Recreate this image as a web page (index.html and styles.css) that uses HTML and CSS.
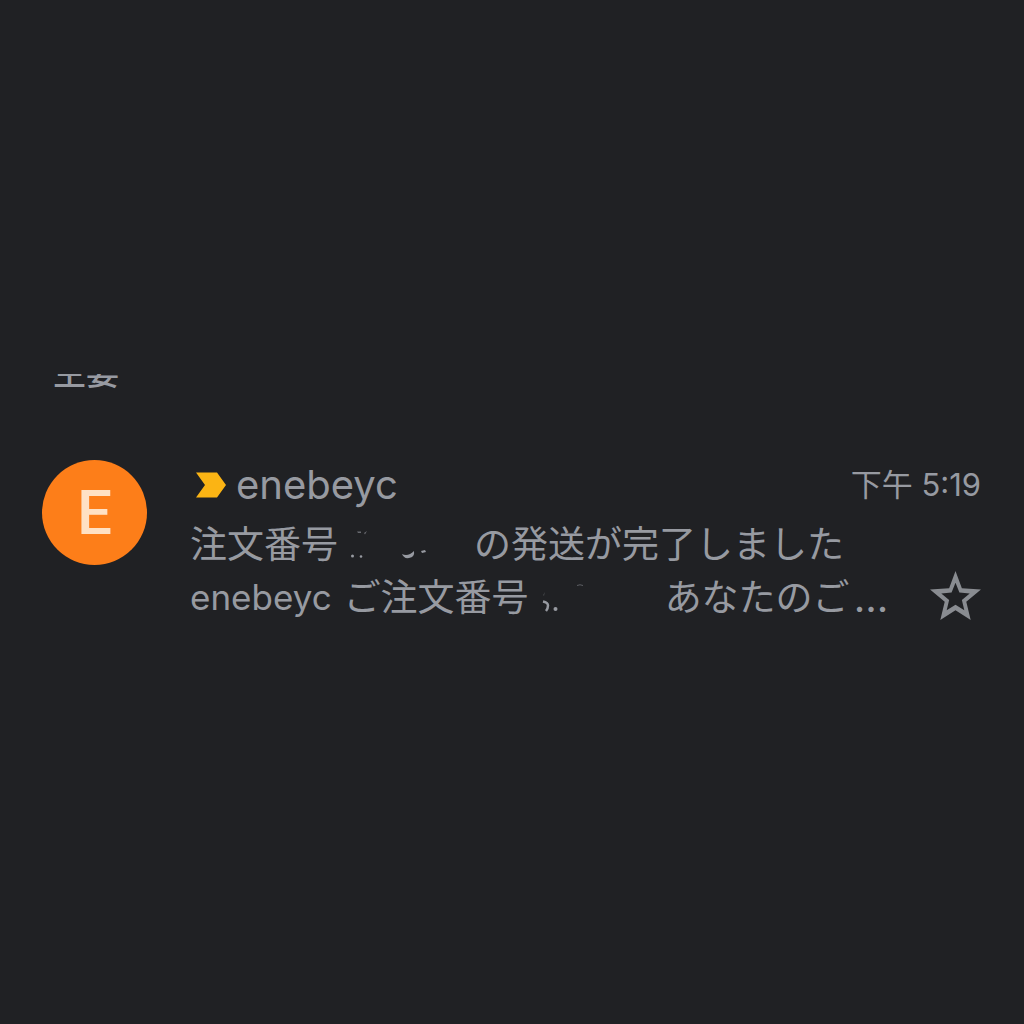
FILE: index.html
```html
<!DOCTYPE html>
<html lang="ja">
<head>
  <meta charset="UTF-8">
  <title>主要</title>
  <meta name="viewport" content="width=device-width, initial-scale=1.0">
  <link rel="stylesheet" href="styles.css">
</head>
<body>

<main class="inbox">
  <h1 class="section-title"><span>主要</span></h1>

  <article class="mail">
    <div class="avatar">E</div>

    <div class="content">
      <div class="top">
        <svg class="marker" viewBox="0 0 30 26" aria-hidden="true">
          <path d="M0 0.500H21L30 13L21 25.500H0L9 13Z" fill="#fbb414"/>
        </svg>
        <h2 class="sender">enebeyc</h2>
        <time class="time">下午 5:19</time>
      </div>

      <p class="line">
        <span>注文番号</span>
        <svg class="hidden-number" viewBox="0 0 136 40" aria-hidden="true">
          <g fill="#979aa1">
            <path d="M19 6.500h4v1.500h-3zM26 8l3-2-2 3.500z" opacity=".6"/>
            <circle cx="14.500" cy="31" r="1.500"/>
            <circle cx="23" cy="31.500" r="1.300"/>
            <path d="M64 29q6 3 12-3q1 6-5 7q-5 1-7-4zM83 26l4-1 1 2-4 1z"/>
          </g>
        </svg>
        <span>の発送が完了しました</span>
      </p>

      <div class="bottom">
        <p class="line">
          <span class="latin">enebeyc</span>
          <span>ご注文番号</span>
          <svg class="hidden-number" viewBox="0 0 136 40" aria-hidden="true">
            <path d="M14 17l2-3-1 4z" fill="#979aa1" opacity=".3"/>
            <path d="M14 23.500q5 1 5 4t-2 5.500" fill="none" stroke="#979aa1" stroke-width="2.500"/>
            <circle cx="26.500" cy="31" r="2" fill="#979aa1"/>
            <path d="M48 7.500q3-1.500 6 0" fill="none" stroke="#979aa1" opacity=".5"/>
          </svg>
          <span>あなたのご</span><span class="dots">...</span>
        </p>
        <button class="star" type="button" aria-label="スター">
          <svg viewBox="0 0 52 50" aria-hidden="true">
            <path fill-rule="evenodd" fill="#898c91" d="M26 0L32.500 17.500L52 19L37 31.500L41.500 50L26 40L10.500 50L15 31.500L0 19L19.500 17.500ZM26 12L22 22L11.500 23L19.500 29.500L17 40L26 34.500L35 40L32.500 29.500L40.500 23L30 22Z"/>
          </svg>
        </button>
      </div>
    </div>
  </article>
</main>

</body>
</html>
```
FILE: styles.css
```css
* {
  box-sizing: border-box;
}

body {
  margin: 0;
  background: #202124;
  color: #979aa1;
  font-family: Inter, "Noto Sans CJK JP", sans-serif;
}

h1,
h2,
p {
  margin: 0;
  font-weight: 400;
}

.inbox {
  padding: 374px 43px 0 42px;
}

/* the title is scrolled half out of view */
.section-title {
  display: flex;
  align-items: flex-end;
  height: 20px;
  padding-left: 11px;
  overflow: hidden;
  font-size: 33px;
  font-weight: 500;
  line-height: 42px;
}

.mail {
  display: flex;
  gap: 43px;
  margin-top: 66px;
}

.avatar {
  display: flex;
  align-items: center;
  justify-content: center;
  flex: none;
  width: 105px;
  height: 105px;
  border-radius: 50%;
  background: #fd7e19;
  color: #ffe1c4;
  font-family: Roboto, sans-serif;
  font-size: 62px;
  font-weight: 500;
}

.content {
  flex: 1;
  min-width: 0;
}

.top {
  display: flex;
  align-items: center;
  height: 50px;
  margin-bottom: 8px;
}

.marker {
  width: 30px;
  height: 26px;
  margin: 0 10px 0 6px;
}

.sender {
  font-size: 40px;
  line-height: 50px;
}

.time {
  margin-left: auto;
  font-size: 31px;
  line-height: 46px;
}

.line {
  display: flex;
  align-items: center;
  height: 53px;
  font-size: 37px;
  line-height: 53px;
  white-space: nowrap;
}

.hidden-number {
  width: 136px;
  height: 40px;
}

.latin {
  margin-right: 12px;
  font-size: 35px;
}

.dots {
  margin-left: 4px;
  font-size: 40px;
}

.bottom {
  display: flex;
  align-items: flex-start;
  justify-content: space-between;
}

.star {
  padding: 0;
  border: 0;
  background: none;
  cursor: pointer;
}

.star svg {
  display: block;
  width: 51px;
  height: 49px;
}
```
